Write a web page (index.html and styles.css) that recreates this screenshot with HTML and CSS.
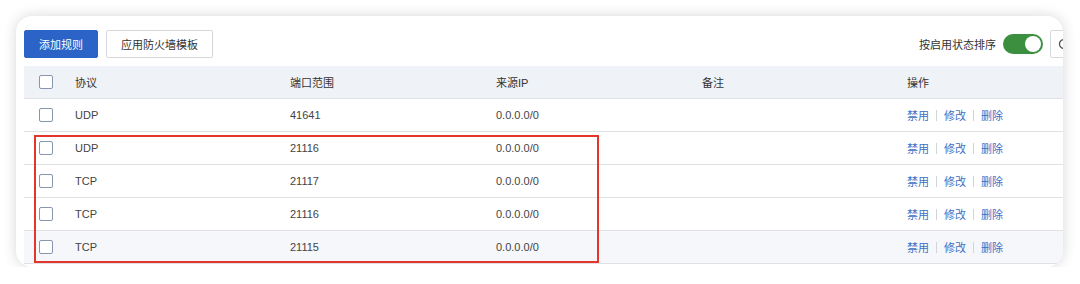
FILE: index.html
```html
<!DOCTYPE html>
<html lang="zh-CN">
<head>
  <meta charset="UTF-8">
  <title>防火墙规则</title>
  <link rel="stylesheet" href="styles.css">
</head>
<body>

  <div class="card">
    <div class="inner">

      <!-- Toolbar -->
      <div class="toolbar">
        <div class="tool-left">
          <button class="btn btn-primary">添加规则</button>
          <button class="btn">应用防火墙模板</button>
        </div>
        <div class="tool-right">
          <span class="sort-label">按启用状态排序</span>
          <span class="switch on"><span class="knob"></span></span>
          <button class="btn btn-icon">
            <svg width="14" height="14" viewBox="0 0 14 14" fill="none" stroke="#555" stroke-width="1.3">
              <path d="M11.5 7a4.5 4.5 0 1 1-1.3-3.2"/>
              <path d="M10.6 1.6v2.6H8"/>
            </svg>
          </button>
        </div>
      </div>

      <!-- Rules table -->
      <div class="table">
        <div class="row head">
          <div class="cell check"><span class="checkbox"></span></div>
          <div class="cell">协议</div>
          <div class="cell">端口范围</div>
          <div class="cell">来源IP</div>
          <div class="cell">备注</div>
          <div class="cell">操作</div>
        </div>

        <div class="row">
          <div class="cell check"><span class="checkbox"></span></div>
          <div class="cell">UDP</div>
          <div class="cell">41641</div>
          <div class="cell">0.0.0.0/0</div>
          <div class="cell"></div>
          <div class="cell actions"><a>禁用</a><i></i><a>修改</a><i></i><a>删除</a></div>
        </div>

        <div class="body-marked">
          <div class="row">
            <div class="cell check"><span class="checkbox"></span></div>
            <div class="cell">UDP</div>
            <div class="cell">21116</div>
            <div class="cell">0.0.0.0/0</div>
            <div class="cell"></div>
            <div class="cell actions"><a>禁用</a><i></i><a>修改</a><i></i><a>删除</a></div>
          </div>
          <div class="row">
            <div class="cell check"><span class="checkbox"></span></div>
            <div class="cell">TCP</div>
            <div class="cell">21117</div>
            <div class="cell">0.0.0.0/0</div>
            <div class="cell"></div>
            <div class="cell actions"><a>禁用</a><i></i><a>修改</a><i></i><a>删除</a></div>
          </div>
          <div class="row">
            <div class="cell check"><span class="checkbox"></span></div>
            <div class="cell">TCP</div>
            <div class="cell">21116</div>
            <div class="cell">0.0.0.0/0</div>
            <div class="cell"></div>
            <div class="cell actions"><a>禁用</a><i></i><a>修改</a><i></i><a>删除</a></div>
          </div>
          <div class="row hover">
            <div class="cell check"><span class="checkbox"></span></div>
            <div class="cell">TCP</div>
            <div class="cell">21115</div>
            <div class="cell">0.0.0.0/0</div>
            <div class="cell"></div>
            <div class="cell actions"><a>禁用</a><i></i><a>修改</a><i></i><a>删除</a></div>
          </div>

          <!-- annotation box -->
          <div class="mark"></div>
        </div>
      </div>

    </div>
  </div>

</body>
</html>
```

FILE: styles.css
```css
body {
  margin: 0;
  padding: 16px 0 0 16px;
  background: #fff;
  font-family: "Liberation Sans", "Noto Sans CJK SC", sans-serif;
  font-size: 11px;
  color: #333;
}

.card {
  width: 1047px;
  height: 251px;
  background: #fff;
  border-radius: 16px;
  box-shadow: 0 0 14px rgba(0, 0, 0, 0.16);
  overflow: hidden;
}

.inner {
  width: 1056px;
  padding: 14px 0 0 8px;
}

.toolbar {
  display: flex;
  justify-content: space-between;
  align-items: center;
  height: 28px;
  margin-bottom: 8px;
}

.tool-left,
.tool-right {
  display: flex;
  align-items: center;
  gap: 8px;
}

.tool-right {
  gap: 7px;
}

.btn {
  height: 28px;
  padding: 0 14px;
  border: 1px solid #d4d7dc;
  border-radius: 2px;
  background: #fff;
  color: #333;
  font-family: inherit;
  font-size: 11px;
  cursor: pointer;
}

.btn-primary {
  background: #2b63c6;
  border-color: #2b63c6;
  color: #fff;
}

.btn-icon {
  width: 30px;
  padding: 0 0 0 6px;
  display: flex;
  align-items: center;
}

.sort-label {
  color: #333;
}

.switch {
  width: 40px;
  height: 20px;
  border-radius: 10px;
  background: #3d8f40;
  display: flex;
  align-items: center;
  justify-content: flex-end;
  padding: 0 2px;
  box-sizing: border-box;
}

.knob {
  width: 16px;
  height: 16px;
  border-radius: 50%;
  background: #fff;
}

.table {
  width: 1056px;
}

.row {
  display: grid;
  grid-template-columns: 51px 215px 206px 206px 205px 1fr;
  height: 32px;
  border-bottom: 1px solid #dfe1e5;
  align-items: center;
  color: #444;
}

.row.head {
  background: #eff2f7;
  color: #333;
}

.row.hover {
  background: #f5f7fa;
}

.cell.check {
  padding-left: 15px;
  display: flex;
}

.checkbox {
  width: 12px;
  height: 12px;
  border: 1px solid #8796ae;
  border-radius: 2px;
  background: #fff;
}

.actions {
  display: flex;
  align-items: center;
}

.actions a {
  color: #3d6fc4;
  cursor: pointer;
}

.actions i {
  width: 1px;
  height: 11px;
  background: #d0d3d8;
  margin: 0 7px;
}

.body-marked {
  position: relative;
}

.mark {
  position: absolute;
  left: 10px;
  top: 3px;
  width: 561px;
  height: 124px;
  border: 2px solid #e4352b;
  pointer-events: none;
}
```
